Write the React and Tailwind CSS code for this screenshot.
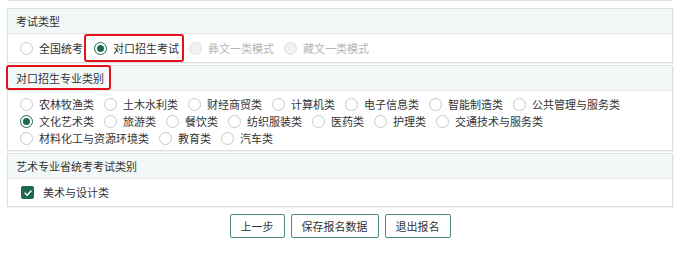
import React from "react";

const examTypes = [
  { label: "全国统考" },
  { label: "对口招生考试", checked: true, marked: true },
  { label: "彝文一类模式", disabled: true },
  { label: "藏文一类模式", disabled: true },
];

const majorRows = [
  ["农林牧渔类", "土木水利类", "财经商贸类", "计算机类", "电子信息类", "智能制造类", "公共管理与服务类"],
  ["文化艺术类", "旅游类", "餐饮类", "纺织服装类", "医药类", "护理类", "交通技术与服务类"],
  ["材料化工与资源环境类", "教育类", "汽车类"],
];

function Radio({ checked, disabled }) {
  if (checked) {
    return (
      <span className="flex h-[13px] w-[13px] shrink-0 items-center justify-center rounded-full border border-[#1e6a50] bg-white">
        <span className="h-[7px] w-[7px] rounded-full bg-[#1e6a50]" />
      </span>
    );
  }
  return (
    <span
      className={
        disabled
          ? "h-[13px] w-[13px] shrink-0 rounded-full border border-[#e0e0e0] bg-[#f1f1f1]"
          : "h-[13px] w-[13px] shrink-0 rounded-full border border-[#c8c8c8] bg-white"
      }
    />
  );
}

function Option({ label, checked, disabled, marked, gap = "mr-[10px]" }) {
  return (
    <span className={`relative flex h-[17px] items-center ${gap}`}>
      <Radio checked={checked} disabled={disabled} />
      <span className={`ml-[6px] whitespace-nowrap ${disabled ? "text-[#b5b5b5]" : "text-[#333]"}`}>{label}</span>
      {marked && <span className="absolute -left-[10px] -right-[5px] -top-[6px] -bottom-[5px] rounded-[3px] border-2 border-[#e3121b]" />}
    </span>
  );
}

function Panel({ title, marked, children }) {
  return (
    <div className="border border-[#e0e0e0] bg-white shadow-[1px_1px_0_rgba(0,0,0,0.05)]">
      <div className="relative flex h-[25px] items-center border-b border-[#e6e6e6] bg-[#f2f8f8] pl-[8px] text-[#333]">
        {title}
        {marked && <span className="absolute -left-[2px] -top-[1px] h-[25px] w-[105px] rounded-[3px] border-2 border-[#e3121b]" />}
      </div>
      {children}
    </div>
  );
}

export default function App() {
  return (
    <div className="h-[265px] w-[680px] overflow-hidden bg-white font-['Noto_Sans_CJK_SC','Noto_Sans',sans-serif] text-[11px] leading-[17px]">
      <div className="mx-[7px] h-px bg-[#e4e4e4]" />
      <div className="mx-[7px] mt-[7px] flex flex-col gap-[2px]">
        <Panel title="考试类型">
          <div className="flex h-[28px] items-center pl-[12px]">
            {examTypes.map((t, i) => (
              <Option key={t.label} {...t} gap={i === 0 ? "mr-[11px]" : "mr-[10px]"} />
            ))}
          </div>
        </Panel>
        <Panel title="对口招生专业类别" marked>
          <div className="flex flex-col pb-[3px] pl-[12px] pt-[5px]">
            {majorRows.map((row, r) => (
              <div key={r} className="flex">
                {row.map((m) => (
                  <Option key={m} label={m} checked={m === "文化艺术类"} />
                ))}
              </div>
            ))}
          </div>
        </Panel>
        <Panel title="艺术专业省统考考试类别">
          <div className="flex h-[27px] items-center pl-[13px]">
            <span className="flex h-[13px] w-[13px] items-center justify-center rounded-[2px] bg-[#1d6b4f]">
              <svg viewBox="0 0 12 12" className="h-[10px] w-[10px]">
                <path d="M2.5 6.2 L5 8.6 L9.6 3.6" fill="none" stroke="white" strokeWidth="1.8" strokeLinecap="round" strokeLinejoin="round" />
              </svg>
            </span>
            <span className="ml-[9px] text-[#333]">美术与设计类</span>
          </div>
        </Panel>
      </div>
      <div className="mt-[7px] flex justify-center gap-[6px]">
        {["上一步", "保存报名数据", "退出报名"].map((b) => (
          <button
            key={b}
            className="flex h-[24px] items-center rounded-[2px] border-[1.5px] border-[#4d8c7c] bg-white px-[10px] text-[11px] text-[#333]"
          >
            {b}
          </button>
        ))}
      </div>
    </div>
  );
}
